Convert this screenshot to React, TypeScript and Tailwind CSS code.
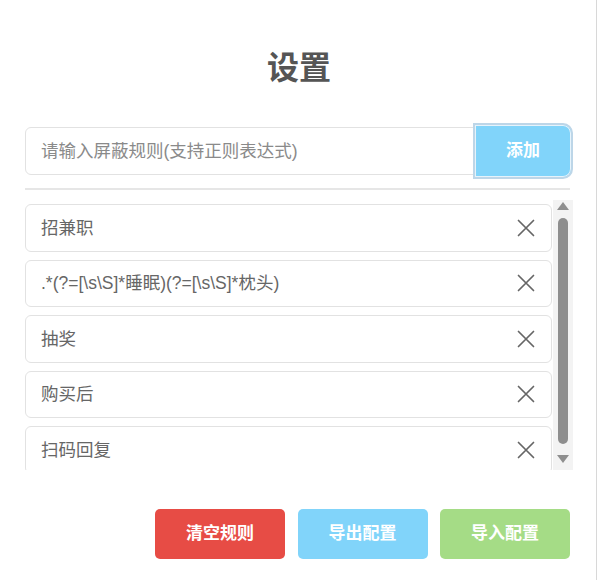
import React from 'react';

const rules = ['招兼职', '.*(?=[\\s\\S]*睡眠)(?=[\\s\\S]*枕头)', '抽奖', '购买后', '扫码回复'];

const font = 'font-["Liberation_Sans","Noto_Sans_CJK_SC",sans-serif]';

function CloseIcon() {
  return (
    <svg width="18" height="18" viewBox="0 0 18 18" fill="none" stroke="#666" strokeWidth="1.7" strokeLinecap="round">
      <path d="M1.5 1.5 L16.5 16.5 M16.5 1.5 L1.5 16.5" />
    </svg>
  );
}

export default function App() {
  const [value, setValue] = React.useState('');

  return (
    <div className={`w-[597px] h-[580px] bg-white pl-[25px] pr-[23px] flex flex-col border-r border-[#d8d8d8] ${font}`}>
      {/* Title */}
      <div className="h-[123px] pt-[52px]">
        <h1 className="text-center text-[32px] leading-[32px] font-bold text-[#555]">设置</h1>
      </div>

      {/* Input row */}
      <div className="flex items-center h-[56px]">
        <input
          value={value}
          onChange={(e) => setValue(e.target.value)}
          placeholder="请输入屏蔽规则(支持正则表达式)"
          className="w-[450px] h-[48px] border border-[#e2e2e2] rounded-l-[6px] pl-[15px] text-[17.5px] text-[#666] placeholder:text-[#8a8a8a] outline-none"
        />
        <button className="-ml-[2px] w-[100px] h-[56px] border-2 border-[#bdd6e8] rounded-r-[10px] bg-[#81d4fa] shadow-[inset_0_0_0_1px_#e6f3fb] text-white text-[17px] font-bold">
          添加
        </button>
      </div>

      <div className="mt-[9px] h-[2px] w-[545px] bg-[#e6e6e6]" />

      {/* Rule list + scrollbar */}
      <div className="mt-[10px] flex h-[270px]">
        <div className="w-[528px] h-[270px] overflow-hidden pt-[4px] flex flex-col gap-[8px]">
          {rules.map((rule) => (
            <div
              key={rule}
              className="w-[527px] h-[47.5px] shrink-0 border border-[#e2e2e2] rounded-[6px] flex items-center justify-between pl-[15px] pr-[16px]"
            >
              <span className="text-[17.5px] text-[#666]">{rule}</span>
              <CloseIcon />
            </div>
          ))}
        </div>
        <div className="w-[20px] h-[270px] bg-[#f3f3f3] flex flex-col items-center pt-[2px]">
          <div className="w-0 h-0 border-l-[6px] border-r-[6px] border-b-[8px] border-l-transparent border-r-transparent border-b-[#8e8e8e]" />
          <div className="mt-[8px] w-[10px] h-[226px] rounded-full bg-[#8e8e8e]" />
          <div className="mt-[11px] w-0 h-0 border-l-[6px] border-r-[6px] border-t-[8px] border-l-transparent border-r-transparent border-t-[#8e8e8e]" />
        </div>
      </div>

      {/* Action buttons */}
      <div className="mt-[39px] flex justify-end gap-[12.5px] pr-[3px]">
        <button className="w-[130px] h-[50px] rounded-[5px] bg-[#e74c45] text-white text-[17px] font-bold">清空规则</button>
        <button className="w-[130px] h-[50px] rounded-[5px] bg-[#81d4fa] text-white text-[17px] font-bold">导出配置</button>
        <button className="w-[130px] h-[50px] rounded-[5px] bg-[#a5dc86] text-white text-[17px] font-bold">导入配置</button>
      </div>
    </div>
  );
}
